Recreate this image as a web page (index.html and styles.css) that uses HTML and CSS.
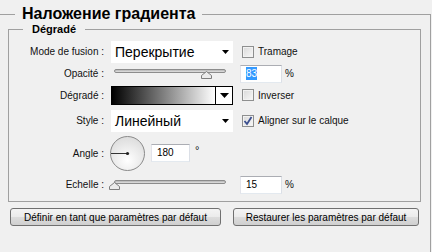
FILE: index.html
```html
<!DOCTYPE html>
<html>
<head>
    <meta charset="UTF-8">
    <title>Наложение градиента</title>
    <link rel="stylesheet" href="styles.css">
</head>
<body>
<fieldset class="panel">
    <legend class="panel-title">Наложение градиента</legend>
    <fieldset class="group">
        <legend class="group-title">Dégradé</legend>

        <div class="row row-mode">
            <span class="label">Mode de fusion :</span>
            <div class="select">
                <span>Перекрытие</span>
                <svg class="arrow" width="7" height="4" viewBox="0 0 7 4"><polygon points="0,0 7,0 3.5,4" fill="#000"/></svg>
            </div>
            <label class="check"><span class="box"></span>Tramage</label>
        </div>

        <div class="row row-opacity">
            <span class="label">Opacité :</span>
            <div class="slider">
                <div class="track"></div>
                <svg class="thumb" style="left: 90px" width="11" height="8" viewBox="0 0 11 8"><polygon points="5.5,0.5 10.5,4.5 10.5,7.5 0.5,7.5 0.5,4.5" fill="#ebebeb" stroke="#7d7d7d"/></svg>
            </div>
            <div class="input"><span class="sel">83</span></div>
            <span class="unit">%</span>
        </div>

        <div class="row row-gradient">
            <span class="label">Dégradé :</span>
            <div class="picker">
                <div class="ramp"></div>
                <div class="drop">
                    <svg width="9" height="5" viewBox="0 0 9 5"><polygon points="0,0 9,0 4.5,5" fill="#000"/></svg>
                </div>
            </div>
            <label class="check"><span class="box"></span>Inverser</label>
        </div>

        <div class="row row-style">
            <span class="label">Style :</span>
            <div class="select">
                <span>Линейный</span>
                <svg class="arrow" width="7" height="4" viewBox="0 0 7 4"><polygon points="0,0 7,0 3.5,4" fill="#000"/></svg>
            </div>
            <label class="check">
                <span class="box checked">
                    <svg width="10" height="10" viewBox="0 0 10 10"><path d="M1.5 5 L4 8 L8.5 1" fill="none" stroke="#3b4f8f" stroke-width="1.8"/></svg>
                </span>Aligner sur le calque
            </label>
        </div>

        <div class="row row-angle">
            <span class="label">Angle :</span>
            <svg class="dial" width="35" height="35" viewBox="0 0 35 35">
                <defs>
                    <radialGradient id="dialFill" cx="50%" cy="70%" r="70%">
                        <stop offset="0" stop-color="#ffffff"/>
                        <stop offset="1" stop-color="#dcdcdc"/>
                    </radialGradient>
                </defs>
                <circle cx="17.5" cy="17.5" r="17" fill="url(#dialFill)" stroke="#8a8a8a"/>
                <line x1="1" y1="17.5" x2="17.5" y2="17.5" stroke="#333" stroke-width="1"/>
                <circle cx="17.5" cy="17.5" r="1.6" fill="#222"/>
            </svg>
            <div class="input short">180</div>
            <span class="deg">°</span>
        </div>

        <div class="row row-scale">
            <span class="label">Echelle :</span>
            <div class="slider">
                <div class="track"></div>
                <svg class="thumb" style="left: -2px" width="11" height="8" viewBox="0 0 11 8"><polygon points="5.5,0.5 10.5,4.5 10.5,7.5 0.5,7.5 0.5,4.5" fill="#ebebeb" stroke="#7d7d7d"/></svg>
            </div>
            <div class="input">15</div>
            <span class="unit">%</span>
        </div>
    </fieldset>

    <div class="buttons">
        <button class="btn btn-wide">Définir en tant que paramètres par défaut</button>
        <button class="btn">Restaurer les paramètres par défaut</button>
    </div>
</fieldset>
</body>
</html>
```

FILE: styles.css
```css
* {
    margin: 0;
    padding: 0;
    box-sizing: border-box;
}

html, body {
    width: 100%;
    height: 100%;
    overflow: hidden;
}

body {
    background: #f0f0f0;
    font-family: "Liberation Sans", Arial, sans-serif;
    font-size: 10px;
    color: #111;
}

/* the panel runs on past the bottom of the window, so no bottom border */
.panel {
    margin: 5px 0 0 -2px;
    width: 433px;
    height: 247px;
    padding: 0 9px;
    border: 1px solid #a0a0a0;
    border-bottom: 0;
}

.panel-title {
    margin-left: 7px;
    padding: 0 7px;
    font-size: 16px;
    font-weight: bold;
    line-height: 18px;
    color: #000;
}

.group {
    width: 413px;
    padding: 5px 0 3px 10px;
    border: 1px solid #a0a0a0;
}

.group-title {
    margin-left: 4px;
    padding: 0 9px;
    font-size: 11px;
    font-weight: bold;
    line-height: 12px;
    color: #000;
}

.row {
    display: flex;
    align-items: center;
}

.row-mode { height: 23px; }
.row-opacity { height: 21px; }
.row-gradient { height: 22px; }
.row-style { height: 29px; }
.row-angle { height: 36px; }
.row-scale { height: 27px; }

.label {
    width: 85px;
    text-align: right;
    white-space: nowrap;
}

.select {
    display: flex;
    align-items: center;
    justify-content: space-between;
    margin-left: 7px;
    width: 122px;
    height: 22px;
    padding: 0 4px;
    background: #fff;
    font-size: 14px;
    color: #000;
}

.check {
    display: flex;
    align-items: center;
    margin-left: 9px;
    white-space: nowrap;
}

.check .box {
    display: flex;
    align-items: center;
    justify-content: center;
    margin-right: 4px;
    width: 12px;
    height: 12px;
    border: 1px solid #8e8f8f;
    background: linear-gradient(135deg, #d9d9d9, #f8f8f8);
    box-shadow: inset 0 0 0 1px #f2f2f2;
}

.slider {
    position: relative;
    margin-left: 7px;
    width: 122px;
    height: 14px;
    padding: 2px 7px 0 3px;
}

.track {
    height: 4px;
    border: 1px solid #8c8c8c;
    border-radius: 2px;
    background: linear-gradient(#b5b5b5, #e2e2e2);
}

.thumb {
    position: absolute;
    top: 4px;
}

.input {
    margin-left: 7px;
    width: 42px;
    height: 18px;
    padding-left: 5px;
    border: 1px solid;
    border-color: #abadb3 #dbdfe6 #e3e9ef #e2e3ea;
    background: #fff;
    line-height: 16px;
    color: #000;
}

.input.short {
    margin-left: 6px;
    width: 39px;
}

.sel {
    display: inline-block;
    background: #3399ff;
    color: #fff;
    line-height: 13px;
}

.unit {
    margin-left: 3px;
}

.picker {
    display: flex;
    margin-left: 7px;
    width: 122px;
    height: 19px;
    border: 1px solid #000;
}

.ramp {
    flex: 1;
    background: linear-gradient(to right, #000, #fff);
}

.drop {
    display: flex;
    align-items: center;
    justify-content: center;
    width: 17px;
    border-left: 1px solid #000;
    background: #fff;
}

.dial {
    margin-left: 6px;
}

.deg {
    align-self: flex-start;
    margin: 9px 0 0 5px;
    font-size: 11px;
}

.buttons {
    display: flex;
    gap: 12px;
    margin-top: 6px;
    padding: 0 2px;
}

.btn {
    width: 186px;
    height: 18px;
    border: 1px solid #707070;
    border-radius: 3px;
    background: linear-gradient(#f4f4f4 0, #ebebeb 50%, #dddddd 50%, #cfcfcf 100%);
    font-family: "Liberation Sans", Arial, sans-serif;
    font-size: 10px;
    color: #000;
}

.btn-wide {
    width: 211px;
}
```
